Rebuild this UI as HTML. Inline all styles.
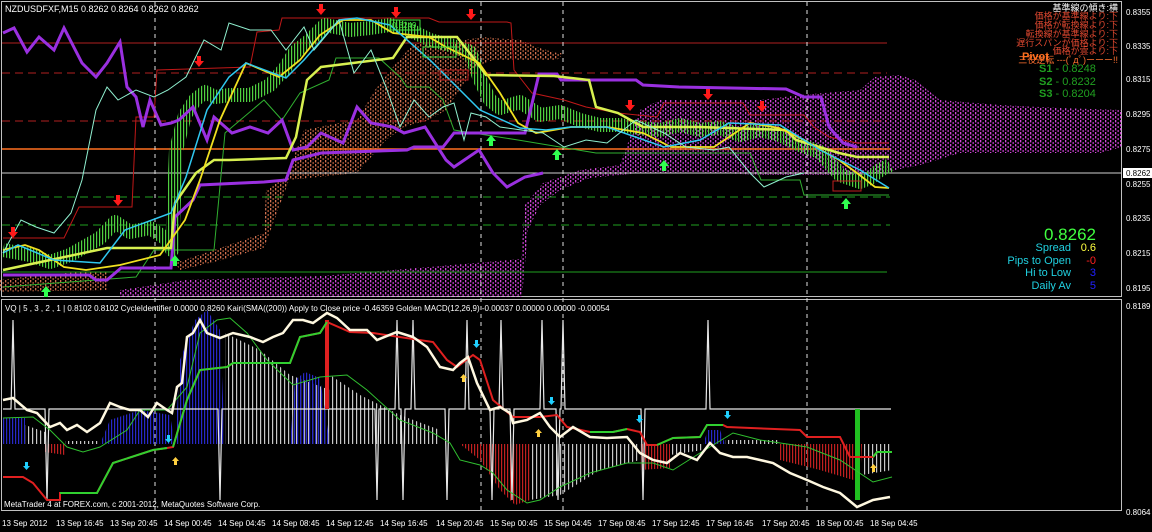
<!DOCTYPE html>
<html><head><meta charset="utf-8"><style>
html,body{margin:0;padding:0;background:#000;width:1152px;height:532px;overflow:hidden}
svg{display:block}
text{font-family:"Liberation Sans","Noto Sans CJK JP",sans-serif}
</style></head><body>
<svg width="1152" height="532" viewBox="0 0 1152 532">
<defs>
<pattern id="pc" width="5" height="4" patternUnits="userSpaceOnUse"><rect x="0" y="0" width="1.3" height="2.4" fill="#d048d8"/><rect x="2.5" y="2" width="1.3" height="2" fill="#b838c0"/></pattern>
<pattern id="oc" width="5" height="4" patternUnits="userSpaceOnUse"><rect x="0" y="0" width="1.3" height="2.4" fill="#d07050"/><rect x="2.5" y="2" width="1.3" height="2" fill="#a85838"/></pattern>
<pattern id="hb" width="3" height="10" patternUnits="userSpaceOnUse"><rect width="1.2" height="10" fill="#2828c8"/></pattern>
<pattern id="hw" width="4" height="10" patternUnits="userSpaceOnUse"><rect width="1.2" height="10" fill="#c8c8c8"/></pattern>
<pattern id="hr" width="3" height="10" patternUnits="userSpaceOnUse"><rect width="1.2" height="10" fill="#c02020"/></pattern>
<pattern id="cg" width="3" height="10" patternUnits="userSpaceOnUse"><rect width="1.2" height="10" fill="#50d040"/></pattern>
<mask id="cm"><polyline fill="none" stroke="#fff" stroke-width="14" stroke-linejoin="round" points="3,250 30,255 50,262 70,255 100,238 115,222 130,232 150,228 165,238 172,250 176,150 185,115 195,100 205,92 215,97 230,95 250,95 270,85 285,68 295,52 310,40 325,25 335,27 350,30 370,28 390,25 410,30 430,40 450,45 470,52 480,80 490,100 500,108 520,102 540,115 560,112 580,120 600,125 620,125 640,128 660,130 680,125 700,130 720,128 740,135 760,130 780,135 800,145 820,152 840,175 860,182 870,178 880,170 890,165"/></mask>
</defs>
<rect width="1152" height="532" fill="#000"/>
<rect x="1.5" y="1.5" width="1120" height="295" fill="none" stroke="#c0c0c0"/>
<rect x="1.5" y="299.5" width="1120" height="211" fill="none" stroke="#c0c0c0"/>
<!-- clouds -->
<polygon points="120,290 186,280 321,276 464,264 521,259 525,205 543,183 580,170 620,165 640,110 660,100 760,100 800,95 860,90 875,77 900,75 915,80 940,100 1000,105 1060,108 1122,110 1122,147 1100,153 960,153 920,165 880,173 860,175 760,175 700,172 640,173 590,178 560,190 540,205 528,230 522,297 120,297" fill="url(#pc)"/>
<polygon points="0,280 40,275 80,272 107,272 107,290 0,292" fill="url(#oc)"/>
<polygon points="175,263 214,250 264,233 266,190 286,177 304,130 339,123 357,120 375,90 393,67 414,43 446,47 464,40 482,37 521,40 536,47 557,53 564,53 557,60 493,60 475,67 446,110 429,120 404,127 386,140 357,173 289,180 264,248 214,262 180,270" fill="url(#oc)"/>
<!-- horizontal levels -->
<line x1="2" y1="43" x2="887" y2="43" stroke="#b02020"/>
<line x1="2" y1="73" x2="887" y2="73" stroke="#b02020" stroke-dasharray="8,5"/>
<line x1="2" y1="121" x2="887" y2="121" stroke="#b02020" stroke-dasharray="8,5"/>
<line x1="2" y1="149" x2="890" y2="149" stroke="#ff7020" stroke-width="1.5"/>
<line x1="2" y1="173" x2="1121" y2="173" stroke="#d0d0d0"/>
<line x1="2" y1="197" x2="890" y2="197" stroke="#20a020" stroke-dasharray="8,5"/>
<line x1="2" y1="225" x2="890" y2="225" stroke="#20a020" stroke-dasharray="8,5"/>
<line x1="2" y1="272" x2="887" y2="272" stroke="#20a020"/>
<g stroke="#e0e0e0" stroke-dasharray="4,4">
<line x1="155" y1="2" x2="155" y2="510"/><line x1="481" y1="2" x2="481" y2="510"/><line x1="563" y1="2" x2="563" y2="510"/><line x1="807" y1="2" x2="807" y2="510"/>
</g>
<polyline fill="none" stroke="#c01818" points="3,238 64,238 79,207 132,207 136,117 154,117 157,70 250,67 257,32 279,30 282,18 429,18 439,22 507,22 511,23 514,70 532,93 564,100 586,107 618,113 657,117 664,103 743,103 750,115 804,115 814,127 829,137 857,143 889,143"/>
<polyline fill="none" stroke="#30b030" points="3,287 136,277 154,250 214,250 225,133 264,100 282,120 300,93 329,80 336,58 379,58 400,77 407,87 429,87 443,100 454,130 518,140 596,153 750,153 761,180 800,180 804,195 889,195"/>
<!-- candles -->
<rect x="0" y="0" width="900" height="297" fill="url(#cg)" mask="url(#cm)"/>
<!-- purple lines -->
<polyline fill="none" stroke="#9a30e0" stroke-width="3" points="3,33 14,28 27,52 39,37 54,50 64,28 82,63 96,77 107,63 120,42 127,87 136,97 143,127 150,100 161,125 171,123 179,120 193,107 207,140 214,117 232,133 250,127 268,133 282,120 293,150 307,147 321,133 343,143 357,107 371,123 393,127 404,133 425,127 446,160 454,167 479,150 493,173 507,187 525,177 543,173"/>
<polyline fill="none" stroke="#9a30e0" stroke-width="3" points="3,275 89,275 96,280 107,280 121,268 171,268 175,217 193,200 200,185 264,182 286,180 293,160 321,153 407,150 414,147 443,147 454,133 525,133 539,74 557,74 561,80 636,80 643,85 679,87 786,89 804,97 821,97 829,127 843,143 857,147"/>
<polyline fill="none" stroke="#d8f050" stroke-width="2.5" points="3,270 36,263 107,248 171,248 175,203 196,173 214,160 229,160 286,158 296,137 307,80 321,67 393,58 407,37 457,37 475,60 486,75 554,76 589,80 596,107 618,113 643,127 700,127 786,130 796,140 839,153 857,157 889,157"/>
<polyline fill="none" stroke="#f0e020" stroke-width="1.8" points="3,250 25,245 39,250 64,267 86,270 120,265 160,255 185,220 200,180 220,120 246,63 279,77 300,60 320,35 343,20 371,20 393,33 429,37 446,47 479,63 500,93 518,123 536,133 571,127 607,127 643,133 671,147 714,147 750,123 779,128 804,140 821,150 839,160 857,173 875,187 889,188"/>
<polyline fill="none" stroke="#30c8f0" stroke-width="1.5" points="3,253 18,245 54,260 100,263 125,230 171,213 186,177 207,110 229,77 246,63 286,78 304,60 339,20 357,18 390,25 430,60 480,110 520,128 546,130 571,127 607,127 664,147 700,140 729,123 780,125 820,150 860,170 889,188"/>
<polyline fill="none" stroke="#90f0d0" stroke-width="1" points="3,253 21,220 36,227 54,233 71,213 82,180 96,110 107,87 118,100 136,90 154,97 168,90 186,77 204,40 221,50 229,23 250,30 271,30 286,50 304,27 314,50 339,20 354,73 371,50 386,87 400,127 414,100 429,117 443,107 454,103 464,140 471,113 486,117 500,127 543,133 564,147 586,140 607,143 636,120 664,133 686,147 714,150 729,147 750,173 764,187 786,177 804,173"/>
<rect x="390" y="20" width="30" height="10" fill="none" stroke="#40e040"/><text x="392" y="28" fill="#40e040" font-size="8">0.8249</text>
<rect x="423" y="47" width="33" height="10" fill="none" stroke="#40e040"/>
<rect x="440" y="70" width="28" height="10" fill="none" stroke="#c02020"/>
<rect x="833" y="181" width="28" height="10" fill="none" stroke="#c02020"/>
<g fill="#ff1a1a">
<path d="M11 227h4v5h3l-5 6-5-6h3z"/><path d="M116 195h4v5h3l-5 6-5-6h3z"/><path d="M197 56h4v5h3l-5 6-5-6h3z"/><path d="M319 4h4v5h3l-5 6-5-6h3z"/><path d="M394 7h4v5h3l-5 6-5-6h3z"/><path d="M469 9h4v5h3l-5 6-5-6h3z"/><path d="M628 100h4v5h3l-5 6-5-6h3z"/><path d="M706 89h4v5h3l-5 6-5-6h3z"/><path d="M760 101h4v5h3l-5 6-5-6h3z"/>
</g>
<g fill="#30ff50">
<path d="M44 297h4v-5h3l-5-6-5 6h3z"/><path d="M173 266h4v-5h3l-5-6-5 6h3z"/><path d="M489 146h4v-5h3l-5-6-5 6h3z"/><path d="M555 160h4v-5h3l-5-6-5 6h3z"/><path d="M662 171h4v-5h3l-5-6-5 6h3z"/><path d="M844 209h4v-5h3l-5-6-5 6h3z"/>
</g>
<text x="5" y="12" fill="#fff" font-size="9">NZDUSDFXF,M15  0.8262 0.8264 0.8262 0.8262</text>
<g font-size="9" text-anchor="end">
<text x="1118" y="11" fill="#fff">基準線の傾き:横</text>
<text x="1118" y="19" fill="#e04830">価格が基準線より:下</text>
<text x="1118" y="28" fill="#e04830">価格が転換線より:下</text>
<text x="1118" y="37" fill="#e04830">転換線が基準線より:下</text>
<text x="1118" y="46" fill="#e04830">遅行スパンが価格より:下</text>
<text x="1118" y="54" fill="#e04830">価格が雲より:下</text>
<text x="1118" y="63" fill="#ff7030">三役逆転 ---(ﾟдﾟ)ーーー!!</text>
</g>
<text x="1022" y="60" fill="#ff7020" font-size="11" font-weight="bold">Pivot</text>
<g font-size="11" fill="#20a020"><text x="1039" y="72"><tspan font-weight="bold">S1</tspan> - 0.8248</text><text x="1039" y="85"><tspan font-weight="bold">S2</tspan> - 0.8232</text><text x="1039" y="97"><tspan font-weight="bold">S3</tspan> - 0.8204</text></g>
<text x="1096" y="240" fill="#40ff40" font-size="17" text-anchor="end">0.8262</text>
<g font-size="11" text-anchor="end">
<text x="1071" y="251" fill="#20d0e0">Spread</text><text x="1071" y="264" fill="#20d0e0">Pips to Open</text><text x="1071" y="276" fill="#20d0e0">Hi to Low</text><text x="1071" y="289" fill="#20d0e0">Daily Av</text>
<text x="1096" y="251" fill="#ffff40">0.6</text><text x="1096" y="264" fill="#ff2020">-0</text><text x="1096" y="276" fill="#2020ff">3</text><text x="1096" y="289" fill="#2020ff">5</text>
</g>
<g font-size="8" fill="#fff">
<text x="1126" y="15">0.8355</text><text x="1126" y="49">0.8335</text><text x="1126" y="82">0.8315</text><text x="1126" y="117">0.8295</text><text x="1126" y="152">0.8275</text>
<rect x="1123" y="168" width="29" height="10" fill="#fff"/><text x="1126" y="176" fill="#000">0.8262</text>
<text x="1126" y="187">0.8255</text><text x="1126" y="221">0.8235</text><text x="1126" y="256">0.8215</text><text x="1126" y="291">0.8195</text>
<text x="1126" y="309">0.8189</text><text x="1126" y="515">0.8064</text>
</g>
<!-- subwindow -->
<text x="5" y="311" fill="#fff" font-size="8">VQ | 5 , 3 , 2 , 1  |  0.8102 0.8102  CycleIdentifier 0.0000 0.8260  Kairi(SMA((200)) Apply to Close price -0.46359  Golden MACD(12,26,9) -0.00037 0.00000 0.00000 -0.00054</text>
<polygon points="3,444 3,418 25,418 25,444" fill="url(#hb)"/>
<polygon points="25,444 25,425 45,432 45,444" fill="url(#hw)"/>
<polygon points="45,444 65,444 65,455 45,452" fill="url(#hr)"/>
<polygon points="65,444 65,441 100,441 100,444" fill="url(#hw)"/>
<polygon points="100,444 110,420 140,410 170,415 175,444" fill="url(#hb)"/>
<polygon points="175,444 180,360 195,320 207,310 220,330 225,444" fill="url(#hb)"/>
<polygon points="225,444 225,333 260,350 290,375 330,390 330,444" fill="url(#hw)"/>
<polygon points="290,444 295,380 305,372 320,378 330,444" fill="url(#hb)"/>
<polygon points="330,444 330,375 360,395 400,415 440,430 440,444" fill="url(#hw)"/>
<polygon points="440,444 460,444 480,460 500,490 515,505 530,500 530,444" fill="url(#hr)"/>
<polygon points="530,444 530,500 560,495 600,470 640,460 640,444" fill="url(#hw)"/>
<polygon points="640,444 640,470 670,468 670,444" fill="url(#hr)"/>
<polygon points="670,444 670,455 703,450 703,444" fill="url(#hw)"/>
<polygon points="703,444 708,430 720,430 725,444" fill="url(#hb)"/>
<polygon points="725,444 725,440 780,440 780,444" fill="url(#hw)"/>
<polygon points="780,444 780,460 820,470 860,482 862,444" fill="url(#hr)"/>
<polygon points="862,444 862,475 892,470 892,444" fill="url(#hw)"/>
<!-- cycle line -->
<polyline fill="none" stroke="#e8e8e8" stroke-width="1.2" points="3,409 11,409 13,320 15,409 45,409 47,500 49,409 218,409 220,500 222,409 375,409 377,500 379,409 395,409 397,320 399,409 401,409 403,500 405,409 411,409 413,320 415,409 445,409 447,500 449,409 465,409 467,320 469,409 490,409 492,500 494,409 499,409 501,320 503,409 510,409 512,500 514,409 540,409 542,320 544,409 556,409 558,500 560,409 561,409 563,320 565,409 641,409 643,500 645,409 706,409 708,320 710,409 891,409"/>
<rect x="855" y="409" width="5" height="91" fill="#20c020"/>
<rect x="325" y="320" width="4" height="89" fill="#e02020"/>
<polyline fill="none" stroke="#e02020" stroke-width="2" points="3,477 23,477 33,483 47,500 60,500 60,493 97,493 113,463 153,450 167,448 173,447 187,400 200,370 227,367 233,363 290,363 300,337 320,333 327,322 350,332 373,333 433,342 447,360 457,367 473,355 480,360 493,400 513,417 540,417 557,415 567,427 590,432 613,432 627,429 640,432 647,445 657,445 673,438 700,437 707,425 723,425 727,427 800,430 807,437 840,437 850,457 873,457 877,452 892,452"/>
<polyline fill="none" stroke="#30d030" stroke-width="2" points="60,493 97,493 113,463 153,450 167,448"/>
<polyline fill="none" stroke="#30d030" stroke-width="2" points="173,447 187,400 200,370 227,367 233,363 290,363 300,337 320,333 327,322"/>
<polyline fill="none" stroke="#30d030" stroke-width="2" points="590,432 613,432 627,429"/>
<polyline fill="none" stroke="#30d030" stroke-width="2" points="657,445 673,438 700,437 707,425 723,425"/>
<polyline fill="none" stroke="#30d030" stroke-width="2" points="873,457 877,452 892,452"/>
<polyline fill="none" stroke="#30c030" stroke-width="1" points="3,418 33,417 50,430 67,447 83,452 100,447 127,430 140,410 167,410 187,387 200,333 217,320 230,318 247,333 267,360 293,385 320,377 347,375 367,390 400,420 433,433 450,443 460,460 480,465 493,473 507,490 527,503 540,500 560,487 590,473 627,463 653,463 673,470 700,453 733,433 760,440 807,447 840,460 873,482 892,477"/>
<polyline fill="none" stroke="#fff8e0" stroke-width="2.5" points="3,400 13,398 27,410 37,413 50,427 60,423 67,430 77,425 87,432 100,423 110,403 120,407 130,410 140,410 148,417 157,403 167,410 172,413 177,387 182,383 187,337 193,333 200,320 207,333 220,338 233,333 250,337 263,342 273,337 283,333 293,320 303,320 313,323 327,313 337,318 350,330 367,330 377,340 397,332 413,337 427,347 440,367 453,370 460,363 468,357 477,383 490,410 500,407 510,413 513,423 527,420 540,413 550,427 560,437 573,427 590,437 607,438 627,437 640,453 653,460 667,463 680,453 697,460 710,443 720,453 733,457 747,457 773,463 790,473 807,480 823,487 840,493 857,507 873,500 890,497"/>
<g fill="#20d0ff"><path d="M25 462h3v4h2l-3.5 4-3.5-4h2z"/><path d="M167 435h3v4h2l-3.5 4-3.5-4h2z"/><path d="M475 340h3v4h2l-3.5 4-3.5-4h2z"/><path d="M550 397h3v4h2l-3.5 4-3.5-4h2z"/><path d="M638 415h3v4h2l-3.5 4-3.5-4h2z"/><path d="M726 411h3v4h2l-3.5 4-3.5-4h2z"/></g>
<g fill="#ffd040"><path d="M174 465h3v-4h2l-3.5-4-3.5 4h2z"/><path d="M462 382h3v-4h2l-3.5-4-3.5 4h2z"/><path d="M537 437h3v-4h2l-3.5-4-3.5 4h2z"/><path d="M872 472h3v-4h2l-3.5-4-3.5 4h2z"/></g>
<text x="4" y="507" fill="#fff" font-size="8">MetaTrader 4 at FOREX.com, c 2001-2012, MetaQuotes Software Corp.</text>
<g font-size="8" fill="#fff">
<text x="2" y="526">13 Sep 2012</text><text x="56" y="526">13 Sep 16:45</text><text x="110" y="526">13 Sep 20:45</text><text x="164" y="526">14 Sep 00:45</text><text x="218" y="526">14 Sep 04:45</text><text x="272" y="526">14 Sep 08:45</text><text x="326" y="526">14 Sep 12:45</text><text x="380" y="526">14 Sep 16:45</text><text x="436" y="526">14 Sep 20:45</text><text x="490" y="526">15 Sep 00:45</text><text x="544" y="526">15 Sep 04:45</text><text x="598" y="526">17 Sep 08:45</text><text x="652" y="526">17 Sep 12:45</text><text x="706" y="526">17 Sep 16:45</text><text x="762" y="526">17 Sep 20:45</text><text x="816" y="526">18 Sep 00:45</text><text x="870" y="526">18 Sep 04:45</text>
</g>
</svg>
</body></html>
